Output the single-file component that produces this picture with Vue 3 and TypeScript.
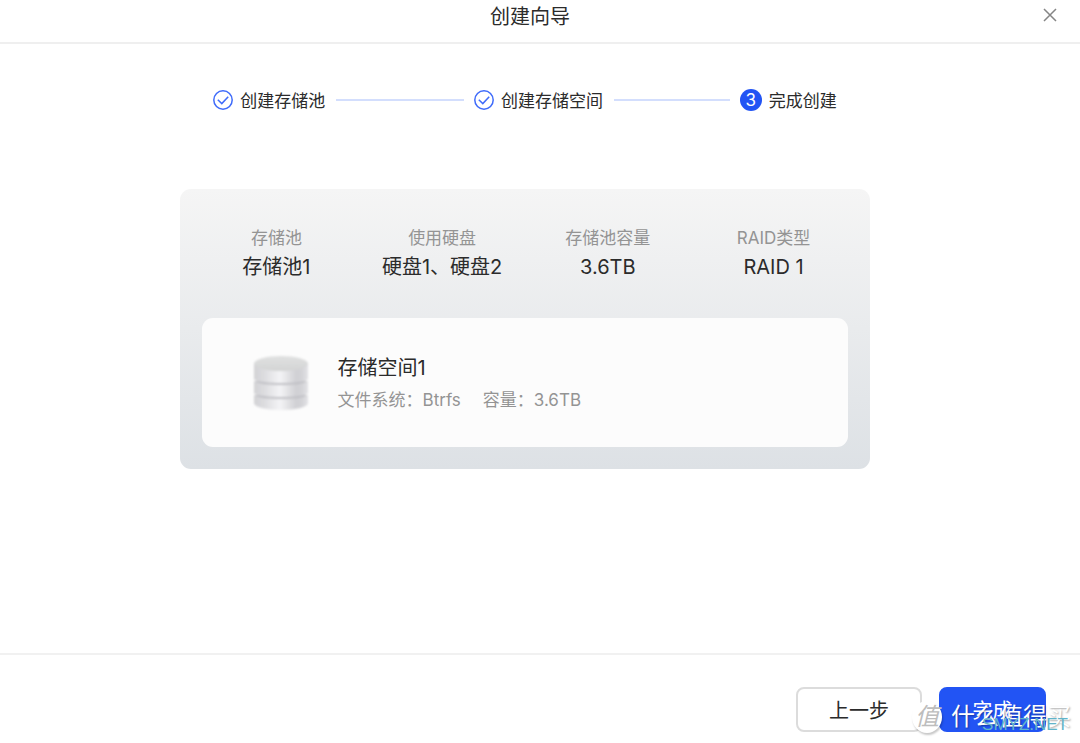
<script setup lang="ts">
interface Step {
  label: string
  done: boolean
}

interface Stat {
  label: string
  value: string
}

const steps: Step[] = [
  { label: '创建存储池', done: true },
  { label: '创建存储空间', done: true },
  { label: '完成创建', done: false },
]

const stats: Stat[] = [
  { label: '存储池', value: '存储池1' },
  { label: '使用硬盘', value: '硬盘1、硬盘2' },
  { label: '存储池容量', value: '3.6TB' },
  { label: 'RAID类型', value: 'RAID 1' },
]
</script>

<template>
  <div class="wizard">
    <header class="header">
      <h1 class="title">创建向导</h1>
      <button class="close" type="button" aria-label="关闭">
        <svg width="14" height="14" viewBox="0 0 14 14" aria-hidden="true">
          <path d="M1 1 L13 13 M13 1 L1 13" fill="none" stroke="#858585" stroke-width="1.5" />
        </svg>
      </button>
    </header>

    <main class="body">
      <ol class="steps">
        <li v-for="(step, index) in steps" :key="step.label" class="step">
          <svg v-if="step.done" class="mark" width="20" height="20" viewBox="0 0 20 20" aria-hidden="true">
            <circle cx="10" cy="10" r="9.2" fill="none" stroke="#3f6bfa" stroke-width="1.5" />
            <path d="M4.8 9.8 L8.8 13.6 L15.2 6.8" fill="none" stroke="#3f6bfa" stroke-width="1.5" />
          </svg>
          <span v-else class="number">{{ index + 1 }}</span>
          <span class="step-label">{{ step.label }}</span>
          <span v-if="index < steps.length - 1" class="line"></span>
        </li>
      </ol>

      <section class="summary">
        <dl class="stats">
          <div v-for="stat in stats" :key="stat.label" class="stat">
            <dt>{{ stat.label }}</dt>
            <dd>{{ stat.value }}</dd>
          </div>
        </dl>

        <article class="volume">
          <svg class="disk" width="58" height="58" viewBox="0 0 58 58" aria-hidden="true">
            <defs>
              <linearGradient id="metal" x1="0" y1="0" x2="1" y2="0">
                <stop offset="0" stop-color="#d2d2d5" />
                <stop offset="0.2" stop-color="#dddde0" />
                <stop offset="0.48" stop-color="#f4f4f6" />
                <stop offset="0.78" stop-color="#d0d0d4" />
                <stop offset="0.88" stop-color="#d3d3d7" />
                <stop offset="1" stop-color="#e3e3e6" />
              </linearGradient>
              <linearGradient id="lid" x1="0" y1="0" x2="0" y2="1">
                <stop offset="0" stop-color="#e0e1e1" />
                <stop offset="1" stop-color="#d3d4d4" />
              </linearGradient>
              <filter id="soft" x="-10%" y="-10%" width="120%" height="120%">
                <feGaussianBlur stdDeviation="0.9" />
              </filter>
            </defs>
            <g filter="url(#soft)">
              <path d="M2 41 V49 C2 53 14 56 29 56 S56 53 56 49 V41 Z" fill="url(#metal)" />
              <path d="M3 41 C6 44 16 45 29 45 S52 44 55 41 Z" fill="#c0c0c5" />
              <path d="M2 27 V39 C2 41 14 43 29 43 S56 41 56 39 V27 Z" fill="url(#metal)" />
              <path d="M3 27 C6 30 16 31 29 31 S52 30 55 27 Z" fill="#c0c0c5" />
              <path d="M2 9 V25 C2 27 14 29 29 29 S56 27 56 25 V9 Z" fill="url(#metal)" />
              <ellipse cx="29" cy="9.5" rx="27" ry="7.5" fill="url(#lid)" />
            </g>
          </svg>
          <div>
            <h2 class="volume-name">存储空间1</h2>
            <p class="volume-meta">
              <span>文件系统：Btrfs</span>
              <span>容量：3.6TB</span>
            </p>
          </div>
        </article>
      </section>
    </main>

    <footer class="footer">
      <button class="button" type="button">上一步</button>
      <button class="button primary" type="button">完成</button>
      <div class="watermark">
        <span class="badge">值</span>
        <span class="slogan">什么值得买</span>
        <span class="site">SMYZ.NET</span>
      </div>
    </footer>
  </div>
</template>

<style>
body {
  margin: 0;
  background: #fff;
}
</style>

<style scoped>
.wizard {
  display: flex;
  flex-direction: column;
  min-height: 100vh;
  background: #fff;
  color: #2b2b2b;
  font-family: Inter, "Noto Sans CJK SC", sans-serif;
  font-size: 17px;
  line-height: 24px;
}

.header {
  display: grid;
  grid-template-columns: 1fr auto;
  align-items: start;
  box-sizing: border-box;
  height: 44px;
  padding: 0 20px;
  border-bottom: 2px solid #efefef;
}

.title {
  margin: 0;
  padding-top: 3px;
  font-size: 20px;
  font-weight: 400;
  line-height: 28px;
  text-align: center;
}

.close {
  display: flex;
  align-items: center;
  justify-content: center;
  width: 20px;
  height: 30px;
  padding: 0;
  border: 0;
  background: none;
}

.body {
  display: flex;
  flex: 1;
  flex-direction: column;
  align-items: center;
  padding: 44px 30px 44px 0;
}

.steps {
  display: grid;
  grid-template-columns: 261fr 266fr auto;
  width: 59.4%;
  min-width: 560px;
  margin: 0;
  padding: 0;
  list-style: none;
}

.step {
  display: flex;
  align-items: center;
  height: 24px;
  white-space: nowrap;
}

.mark {
  flex: none;
}

.step-label {
  margin-left: 7px;
  padding-top: 2px;
}

.line {
  flex: 1;
  height: 2px;
  margin: 0 10px 0 11px;
  background: #d3defd;
}

.number {
  width: 22px;
  height: 22px;
  border-radius: 50%;
  background: #2254f4;
  color: #fff;
  line-height: 22px;
  text-align: center;
}

.summary {
  box-sizing: border-box;
  width: 65.8%;
  min-width: 600px;
  margin-top: 77px;
  padding: 37px 22px 22px;
  border-radius: 11px;
  background: linear-gradient(#f5f5f5, #dde1e5);
}

.stats {
  display: grid;
  grid-template-columns: repeat(4, 1fr);
  margin: 0 -8px 36px;
  text-align: center;
}

.stat dt {
  color: #949494;
}

.stat dd {
  margin: 2px 0 0;
  font-size: 20px;
  line-height: 30px;
}

.volume {
  display: flex;
  align-items: center;
  gap: 28px;
  padding: 35px 50px;
  border-radius: 11px;
  background: #fcfcfc;
}

.disk {
  flex: none;
}

.volume-name {
  margin: 0;
  font-size: 20px;
  font-weight: 400;
  line-height: 30px;
}

.volume-meta {
  display: flex;
  gap: 22px;
  margin: 5px 0 0;
  color: #949494;
}

.footer {
  position: relative;
  display: flex;
  justify-content: flex-end;
  gap: 17px;
  padding: 32px 34px 11px;
  border-top: 2px solid #f1f1f1;
}

.button {
  box-sizing: border-box;
  min-width: 107px;
  height: 45px;
  padding: 2px 31px 0;
  border: 2px solid #dcdcdc;
  border-radius: 8px;
  background: #fff;
  color: #2b2b2b;
  font: inherit;
  font-size: 20px;
}

.primary {
  border-color: #2254f4;
  background: #2254f4;
  color: #fff;
}

.watermark {
  position: absolute;
  right: 9px;
  bottom: 10px;
  display: flex;
  align-items: center;
  gap: 9px;
  pointer-events: none;
}

.badge {
  width: 30px;
  height: 32px;
  border-radius: 50%;
  background: #fff;
  box-shadow: 1px 2px 2px rgba(0, 0, 0, 0.22);
  color: #bdbdbd;
  font-size: 24px;
  font-style: italic;
  line-height: 32px;
  text-align: center;
}

.slogan {
  color: #fff;
  font-size: 24px;
  line-height: 32px;
  text-shadow: 1px 1px 2px rgba(0, 0, 0, 0.35);
}

.site {
  position: absolute;
  right: 3px;
  bottom: -2px;
  color: #62b4c9;
  font-family: "Liberation Sans", sans-serif;
  font-size: 17px;
  line-height: 20px;
}
</style>
